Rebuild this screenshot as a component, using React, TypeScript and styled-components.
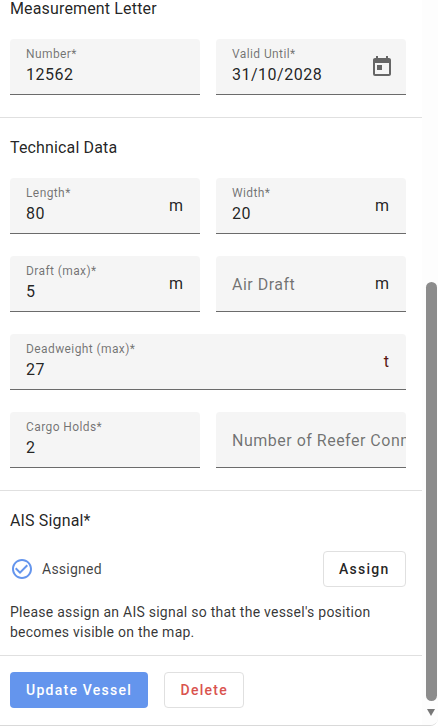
import React from 'react'
import styled, {createGlobalStyle} from 'styled-components'

const GlobalStyle = createGlobalStyle`
  html, body {
    margin: 0;
    padding: 0;
    background: #fff;
  }
  body {
    font-family: Roboto, "Noto Sans", sans-serif;
    color: rgba(0, 0, 0, 0.87);
  }
  * {
    box-sizing: border-box;
  }
`

const TextField = ({label, value, unit, icon, placeholder}: {
  label?: string
  value?: string
  unit?: string
  icon?: React.ReactNode
  placeholder?: string
}) => (
  <Field>
    <FieldBody>
      {placeholder ? (
        <Placeholder>{placeholder}</Placeholder>
      ) : (
        <>
          <Label>{label}</Label>
          <Value>{value}</Value>
        </>
      )}
    </FieldBody>
    {unit && <Unit $dark={unit === 't'}>{unit}</Unit>}
    {icon}
  </Field>
)

const App = () => {
  return (
    <Page>
      <GlobalStyle />
      <Panel>
        <Section $pad="0 16px 22px 10px">
          <Heading>Measurement Letter</Heading>
          <Row>
            <TextField label="Number*" value="12562" />
            <TextField
              label="Valid Until*"
              value="31/10/2028"
              icon={
                <CalendarIcon viewBox="0 0 24 24">
                  <path d="M19 4h-1V2h-2v2H8V2H6v2H5c-1.11 0-1.99.9-1.99 2L3 20a2 2 0 0 0 2 2h14c1.1 0 2-.9 2-2V6c0-1.1-.9-2-2-2zm0 16H5V9h14v11zM7 11h5v5H7z" />
                </CalendarIcon>
              }
            />
          </Row>
        </Section>
        <Section $pad="21px 16px 22px 10px" $border>
          <Heading>Technical Data</Heading>
          <Rows>
            <Row>
              <TextField label="Length*" value="80" unit="m" />
              <TextField label="Width*" value="20" unit="m" />
            </Row>
            <Row>
              <TextField label="Draft (max)*" value="5" unit="m" />
              <TextField placeholder="Air Draft" unit="m" />
            </Row>
            <TextField label="Deadweight (max)*" value="27" unit="t" />
            <Row>
              <TextField label="Cargo Holds*" value="2" />
              <TextField placeholder="Number of Reefer Connections" />
            </Row>
          </Rows>
        </Section>
        <Section $pad="21px 16px 13px 10px" $border>
          <Heading>AIS Signal*</Heading>
          <AssignRow>
            <Status>
              <CheckIcon viewBox="0 0 24 24">
                <path d="M16.59 7.58 10 14.17l-3.59-3.58L5 12l5 5 8-8zM12 2C6.48 2 2 6.48 2 12s4.48 10 10 10 10-4.48 10-10S17.52 2 12 2zm0 18c-4.42 0-8-3.58-8-8s3.58-8 8-8 8 3.58 8 8-3.58 8-8 8z" />
              </CheckIcon>
              <StatusText>Assigned</StatusText>
            </Status>
            <OutlineButton>Assign</OutlineButton>
          </AssignRow>
          <Hint>Please assign an AIS signal so that the vessel's position becomes visible on the map.</Hint>
        </Section>
        <Actions>
          <PrimaryButton>Update Vessel</PrimaryButton>
          <OutlineButton $danger>Delete</OutlineButton>
        </Actions>
      </Panel>
      <Track>
        <Thumb />
        <ArrowDown />
      </Track>
    </Page>
  )
}

export default App

const Page = styled.div`
  width: 438px;
  height: 726px;
  display: flex;
  overflow: hidden;
  border-bottom: 1px solid #d9d9d9;
  border-bottom-right-radius: 8px;
`
const Panel = styled.div`
  width: 422px;
  flex-shrink: 0;
`
const Section = styled.div<{$pad: string; $border?: boolean}>`
  padding: ${(p) => p.$pad};
  border-top: ${(p) => (p.$border ? '1px solid #e0e0e0' : 'none')};
`
const Heading = styled.div`
  font-size: 16px;
  line-height: 18px;
  letter-spacing: 0.15px;
  margin-bottom: 21px;
  color: rgba(0, 0, 0, 0.87);
`
const Rows = styled.div`
  display: flex;
  flex-direction: column;
  gap: 22px;
`
const Row = styled.div`
  display: grid;
  grid-template-columns: 190px 190px;
  column-gap: 16px;
`
const Field = styled.div`
  height: 56px;
  display: flex;
  align-items: center;
  background: #f5f5f5;
  border-bottom: 1px solid #6b6b6b;
  border-radius: 4px 4px 0 0;
  padding: 0 17px 0 16px;
  overflow: hidden;
`
const FieldBody = styled.div`
  flex: 1;
  min-width: 0;
  white-space: nowrap;
`
const Label = styled.div`
  font-size: 12px;
  line-height: 14px;
  letter-spacing: 0.4px;
  color: rgba(0, 0, 0, 0.55);
  margin-bottom: 3px;
`
const Value = styled.div`
  font-size: 16px;
  line-height: 21px;
  letter-spacing: 0.5px;
  padding-bottom: 2px;
  color: rgba(0, 0, 0, 0.87);
`
const Placeholder = styled.div`
  font-size: 16px;
  line-height: 24px;
  letter-spacing: 0.5px;
  padding-top: 3px;
  color: rgba(0, 0, 0, 0.55);
`
const Unit = styled.span<{$dark?: boolean}>`
  font-size: 16px;
  line-height: 24px;
  flex-shrink: 0;
  margin: 1px 0 0 8px;
  color: ${(p) => (p.$dark ? '#5a1610' : 'rgba(0, 0, 0, 0.87)')};
`
const CalendarIcon = styled.svg`
  width: 24px;
  height: 24px;
  flex-shrink: 0;
  margin-right: -5px;
  margin-top: -1px;
  fill: #666;
`
const AssignRow = styled.div`
  display: flex;
  align-items: center;
  justify-content: space-between;
  margin-bottom: 15px;
`
const Status = styled.div`
  display: flex;
  align-items: center;
  gap: 8px;
`
const CheckIcon = styled.svg`
  width: 24px;
  height: 24px;
  fill: #6495ed;
`
const StatusText = styled.span`
  font-size: 14px;
  line-height: 20px;
  letter-spacing: 0.25px;
  color: rgba(0, 0, 0, 0.75);
`
const Hint = styled.p`
  margin: 0;
  font-size: 14px;
  line-height: 20px;
  letter-spacing: 0.25px;
  color: rgba(0, 0, 0, 0.8);
`
const Actions = styled.div`
  display: flex;
  gap: 16px;
  padding: 16px 16px 0 10px;
  border-top: 1px solid #e0e0e0;
`
const PrimaryButton = styled.button`
  height: 36px;
  padding: 0 16px;
  border: none;
  border-radius: 4px;
  background: #6495ed;
  color: #fff;
  font-family: inherit;
  font-size: 14px;
  font-weight: 500;
  letter-spacing: 1.25px;
`
const OutlineButton = styled.button<{$danger?: boolean}>`
  height: 36px;
  padding: 0 15.5px;
  border: 1px solid #e0e0e0;
  border-radius: 4px;
  background: #fff;
  color: ${(p) => (p.$danger ? '#d9534f' : 'rgba(0, 0, 0, 0.87)')};
  font-family: inherit;
  font-size: 14px;
  font-weight: 500;
  letter-spacing: 1.25px;
`
const Track = styled.div`
  width: 16px;
  flex-shrink: 0;
  background: #fdfdfd;
  display: flex;
  flex-direction: column;
  align-items: flex-start;
  padding: 282px 0 0 4px;
`
const Thumb = styled.div`
  width: 11px;
  height: 419px;
  background: #8c8c8c;
  border-radius: 6px;
`
const ArrowDown = styled.div`
  margin: 8px 0 0 1px;
  width: 0;
  height: 0;
  border-left: 4.5px solid transparent;
  border-right: 4.5px solid transparent;
  border-top: 7px solid #777;
`
